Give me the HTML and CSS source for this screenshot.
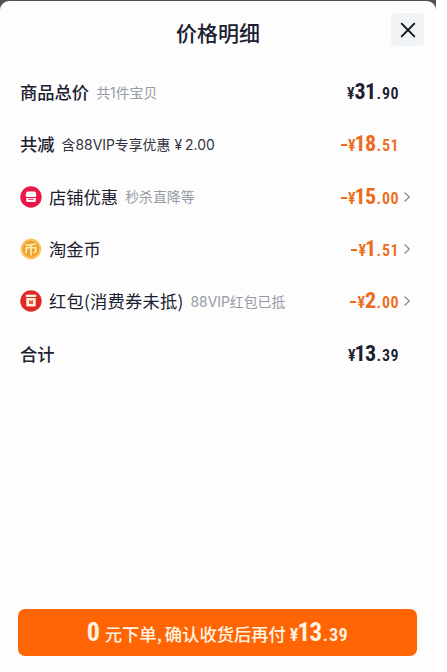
FILE: index.html
```html
<!DOCTYPE html>
<html lang="zh-CN">
<head>
    <meta charset="UTF-8">
    <meta name="viewport" content="width=device-width, initial-scale=1.0">
    <title>价格明细</title>
    <link rel="stylesheet" href="styles.css">
</head>
<body>
    <div class="page">
        <div class="sheet">
            <header>
                <h1>价格明细</h1>
                <button class="close" aria-label="关闭">
                    <svg width="16" height="16" viewBox="0 0 16 16"><path d="M1.7 1.7L14.3 14.3M14.3 1.7L1.7 14.3"/></svg>
                </button>
            </header>

            <div class="list">
                <div class="row">
                    <span class="label bold">商品总价</span>
                    <span class="note">共1件宝贝</span>
                    <span class="price"><small>¥</small><b>31</b><small class="dot">.</small><small class="cents">90</small></span>
                </div>
                <div class="row">
                    <span class="label bold">共减</span>
                    <span class="note dark">含88VIP专享优惠<span class="yen">¥</span>2.00</span>
                    <span class="price orange"><i class="minus"></i><small>¥</small><b class="one">18</b><small class="dot">.</small><small class="cents">51</small></span>
                </div>
                <div class="row">
                    <svg class="icon" viewBox="0 0 22 22">
                        <circle cx="11" cy="11" r="10.7" fill="#ea1748"/>
                        <path d="M7.5 5.6h7q1 0 1.2 1l.7 3q0 1.4-1.5 1.4H7.1q-1.5 0-1.5-1.4l.7-3q.2-1 1.2-1z" fill="#fff"/>
                        <path d="M6.2 12h9.6v2.6q0 1.5-1.5 1.5H7.7q-1.5 0-1.5-1.5z" fill="#fff"/>
                        <path d="M8.3 13.3h5.4" stroke="#ea1748" stroke-width="1"/>
                    </svg>
                    <span class="label">店铺优惠</span>
                    <span class="note">秒杀直降等</span>
                    <span class="price orange"><i class="minus"></i><small>¥</small><b class="one">15</b><small class="dot">.</small><small class="cents">00</small></span>
                    <svg class="arrow" viewBox="0 0 8 12"><path d="M1.5 1.5L6.3 6L1.5 10.5"/></svg>
                </div>
                <div class="row">
                    <svg class="icon" viewBox="0 0 22 22">
                        <circle cx="11" cy="11" r="10.4" fill="#f8c45c"/>
                        <circle cx="11" cy="11" r="8.3" fill="#efa02c"/>
                        <path d="M6.2 6.9Q11 6.9 15.6 6M6.2 14.6V9.6H15.8V13.4Q15.8 14.6 14 14.4M11 7v9.8" fill="none" stroke="#ffe9ac" stroke-width="1.7" stroke-linecap="round" stroke-linejoin="round"/>
                    </svg>
                    <span class="label">淘金币</span>
                    <span class="price orange"><i class="minus"></i><small>¥</small><b class="one">1</b><small class="dot">.</small><small class="cents">51</small></span>
                    <svg class="arrow" viewBox="0 0 8 12"><path d="M1.5 1.5L6.3 6L1.5 10.5"/></svg>
                </div>
                <div class="row">
                    <svg class="icon" viewBox="0 0 22 22">
                        <circle cx="11" cy="11" r="10.7" fill="#df2828"/>
                        <path d="M5.8 4.7h10.4v2.3H5.8z" fill="#fff0d8"/>
                        <path d="M6.3 7.9h9.4v7.3q0 1.4-1.4 1.4H7.7q-1.4 0-1.4-1.4z" fill="#fff0d8"/>
                        <path d="M9 9.7l2 1.5 2-1.5v4.4H9z" fill="#e45a43"/>
                    </svg>
                    <span class="label wide">红包(消费券未抵)</span>
                    <span class="note">88VIP红包已抵</span>
                    <span class="price orange"><i class="minus"></i><small>¥</small><b>2</b><small class="dot">.</small><small class="cents">00</small></span>
                    <svg class="arrow" viewBox="0 0 8 12"><path d="M1.5 1.5L6.3 6L1.5 10.5"/></svg>
                </div>
                <div class="row">
                    <span class="label bold">合计</span>
                    <span class="price"><small>¥</small><b class="one">13</b><small class="dot">.</small><small class="cents">39</small></span>
                </div>
            </div>

            <button class="submit">
                <span class="num zero">0</span>
                <span class="text">元下单<span class="comma">,</span>确认收货后再付</span>
                <span class="num"><small>¥</small><b class="one">13</b><small class="dot">.</small><small class="cents">39</small></span>
            </button>
        </div>
    </div>
</body>
</html>
```

FILE: styles.css
```css
* {
    box-sizing: border-box;
}
body {
    margin: 0;
    background-color: #fff;
    font-family: "Noto Sans CJK SC", sans-serif;
    color: #1b2030;
}
.page {
    width: 436px;
    height: 672px;
    padding-top: 1px;
    background: linear-gradient(#555153 12px, #fff 12px);
}
.sheet {
    display: flex;
    flex-direction: column;
    height: 671px;
    background-color: #fdfdfd;
    border-radius: 9px 9px 0 0;
}
header {
    display: grid;
    grid-template-columns: 1fr auto 1fr;
    height: 65px;
    padding: 12px 12px 0;
}
h1 {
    grid-column: 2;
    margin: 4px 0 0;
    font-size: 21px;
    line-height: 30px;
    font-weight: 500;
}
.close {
    justify-self: end;
    display: flex;
    align-items: center;
    justify-content: center;
    width: 33px;
    height: 33px;
    padding: 0;
    border: none;
    border-radius: 4px;
    background-color: #f1f4f7;
}
.close svg {
    fill: none;
    stroke: #111;
    stroke-width: 1.9;
    stroke-linecap: round;
}
.list {
    flex: 1;
    padding: 0 24px 0 20px;
}
.row {
    display: flex;
    align-items: center;
    height: 52.3px;
    white-space: nowrap;
}
.icon {
    width: 22px;
    height: 22px;
    margin-right: 7px;
}
.label {
    font-size: 17.3px;
    line-height: 26px;
}
.label.wide {
    letter-spacing: 0.2px;
}
.bold {
    font-weight: 500;
}
.note {
    margin: 1px 0 0 7px;
    font-family: Inter, "Noto Sans CJK SC", sans-serif;
    font-size: 13.9px;
    line-height: 20px;
    color: #969ba5;
}
.note.dark {
    color: #30343f;
}
.yen {
    margin: 0 3px 0 4px;
}
.price {
    display: flex;
    align-items: baseline;
    margin: 2px 13px 0 auto;
    font-family: Roboto, sans-serif;
    font-size: 22px;
    line-height: 26px;
    font-stretch: 75%;
}
.price b,
.num b {
    font-weight: 700;
    letter-spacing: -0.6px;
}
.price small,
.num small {
    font-size: 16px;
    font-weight: 600;
}
.price .one,
.num .one {
    margin-left: -1px;
}
.price .dot,
.num .dot {
    margin: 0 1px;
}
.price .cents,
.num .cents {
    letter-spacing: 0.4px;
}
.orange {
    color: #ec6b1c;
}
.minus {
    align-self: center;
    width: 6px;
    height: 2px;
    margin-right: 1px;
    background-color: #ec6b1c;
}
.arrow {
    width: 8px;
    height: 12px;
    margin: 0 1px 0 -9px;
    fill: none;
    stroke: #8c9096;
    stroke-width: 1.3;
}
.submit {
    display: flex;
    align-items: baseline;
    justify-content: center;
    height: 47px;
    margin: 0 19px 16px 18px;
    padding: 0;
    border: none;
    border-radius: 7px;
    background-color: #ff6504;
    color: #fff3e2;
    font-family: inherit;
    font-size: 17.3px;
    line-height: 47px;
    font-weight: 500;
}
.num {
    font-family: Roboto, sans-serif;
    font-size: 25px;
    font-weight: 700;
    font-stretch: 75%;
}
.num small {
    font-size: 18.5px;
}
.zero {
    margin-right: 5px;
    font-size: 26px;
}
.comma {
    margin-right: 3px;
}
.text {
    margin-right: 4px;
}
```
